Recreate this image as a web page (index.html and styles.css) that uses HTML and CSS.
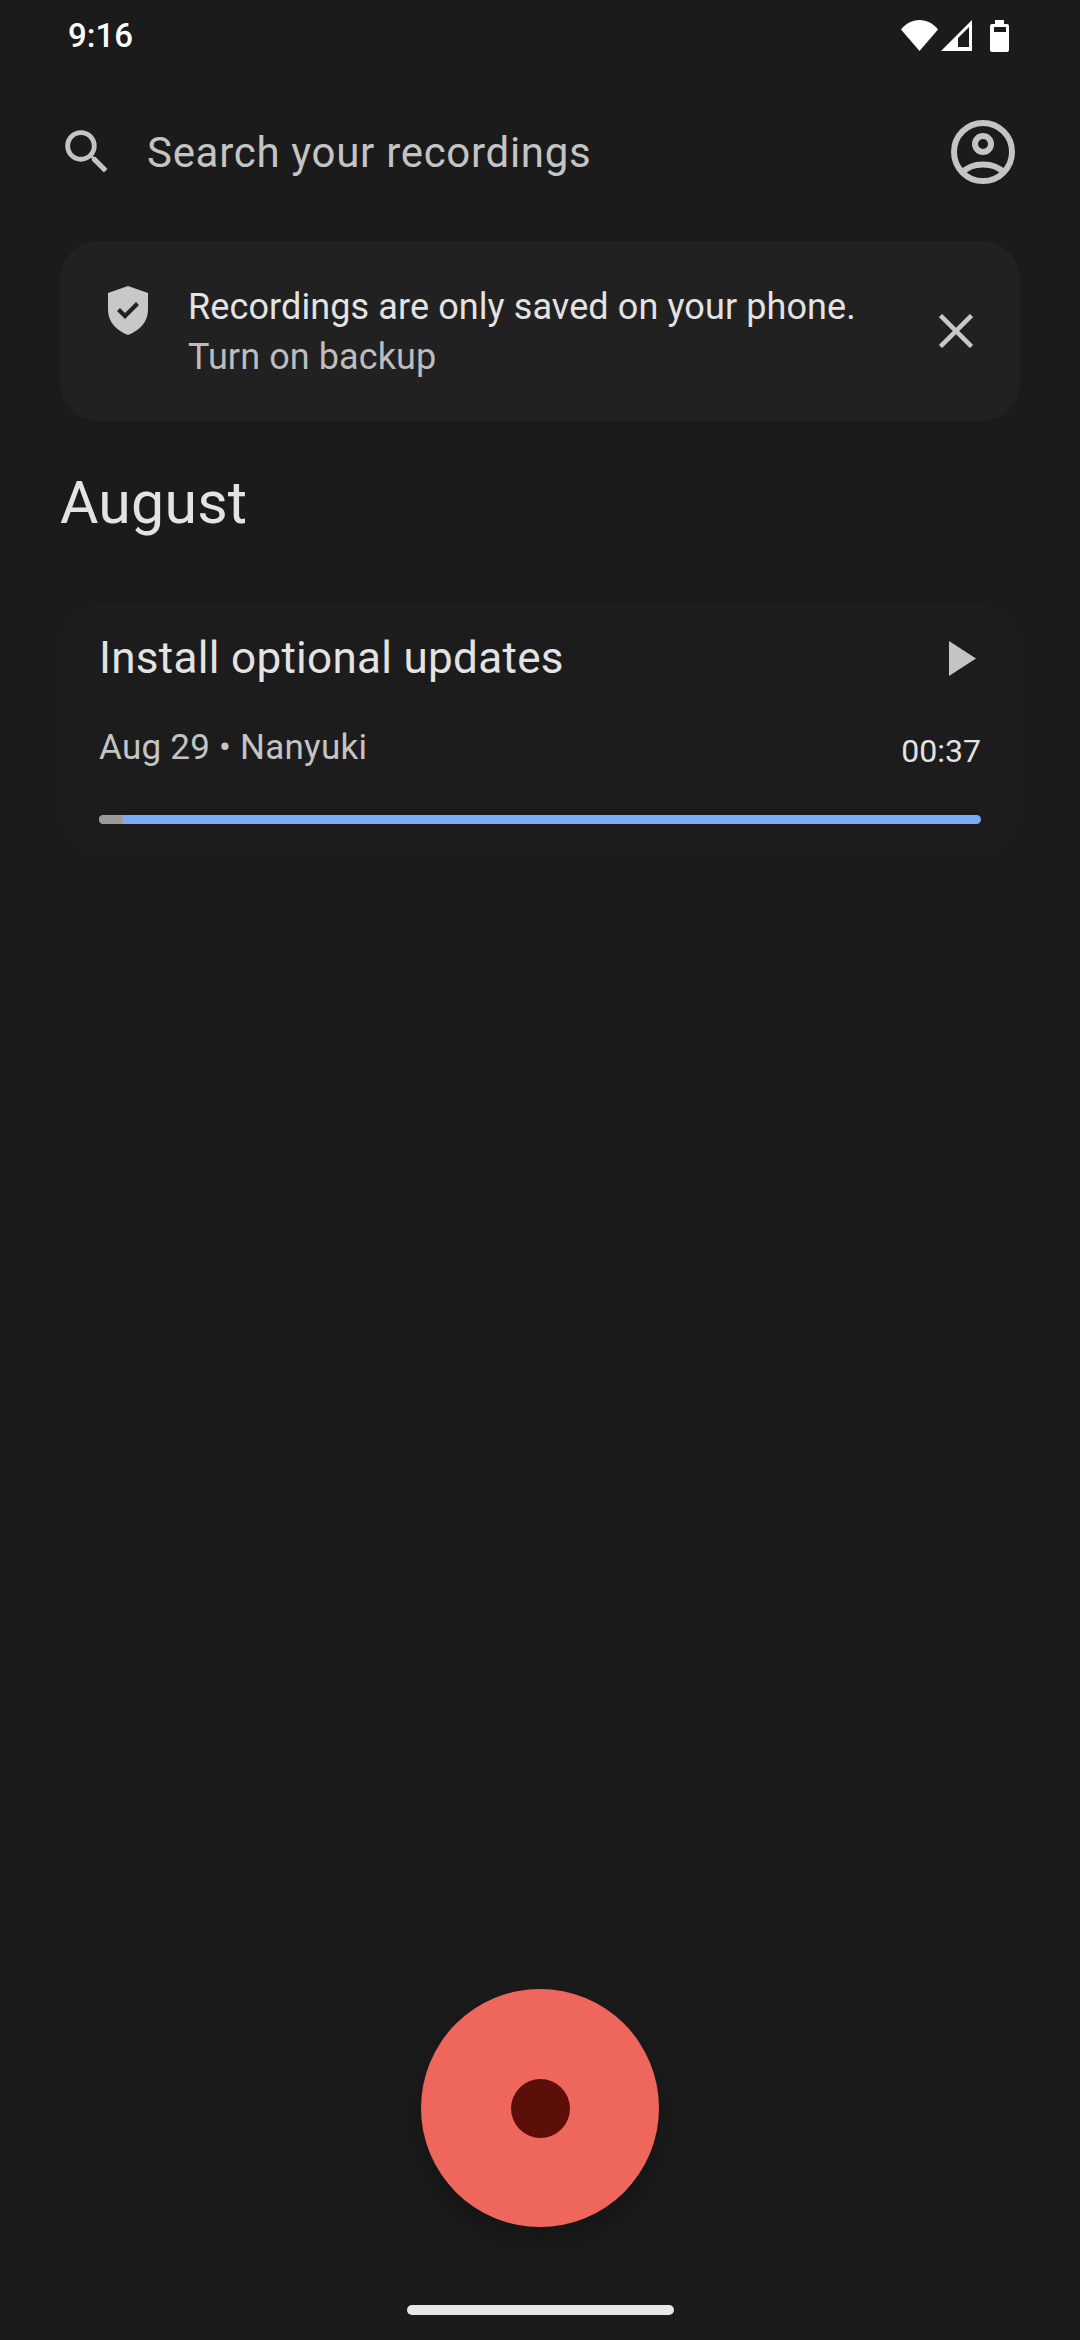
FILE: index.html
```html
<!DOCTYPE html>
<html lang="en">
<head>
    <meta charset="UTF-8">
    <meta name="viewport" content="width=device-width, initial-scale=1.0">
    <title>Recorder</title>
    <link rel="stylesheet" href="styles.css">
</head>
<body>
    <div id="screen">
        <div id="status-bar">
            <span class="time">9:16</span>
            <div class="status-icons">
                <svg class="wifi" width="37" height="31" viewBox="0 0 37 31"><path d="M0 9.500C5 3.500 11 0 18.500 0S32 3.500 37 9.500L18.500 31Z"/></svg>
                <svg class="signal" width="31" height="31" viewBox="0 0 31 31"><path fill-rule="evenodd" d="M0 31L31 0V31ZM17 27H28V7L17 18Z"/></svg>
                <svg class="battery" width="19" height="32" viewBox="0 0 19 32"><path fill-rule="evenodd" d="M5 0H14V4H17Q19 4 19 6V30Q19 32 17 32H2Q0 32 0 30V6Q0 4 2 4H5ZM4 7V12H16V7Z"/></svg>
            </div>
        </div>

        <div id="search">
            <svg class="search-icon" width="58" height="58" viewBox="0 0 24 24"><path d="M15.500 14h-.79l-.28-.27A6.470 6.470 0 0 0 16 9.500 6.500 6.500 0 1 0 9.500 16c1.610 0 3.090-.59 4.230-1.570l.27.28v.79l5 4.990L20.490 19l-4.990-5zm-6 0C7.010 14 5 11.990 5 9.500S7.010 5 9.500 5 14 7.010 14 9.500 11.990 14 9.500 14z"/></svg>
            <span class="search-text">Search your recordings</span>
            <svg class="avatar" width="64" height="64" viewBox="0 0 64 64">
                <circle cx="32" cy="32" r="29"/>
                <circle cx="32" cy="24" r="8"/>
                <path d="M11 53C17 46 24 44.500 32 44.500S47 46 53 53"/>
            </svg>
        </div>

        <div id="backup-card">
            <svg class="shield" width="40" height="49" viewBox="0 0 40 49"><path fill-rule="evenodd" d="M20 0L40 7V24C40 36 31 45 20 49C9 45 0 36 0 24V7ZM9 25L12 22L17 27L28 16L31 19L17 33Z"/></svg>
            <div class="backup-text">
                <p class="backup-main">Recordings are only saved on your phone.</p>
                <p class="backup-link">Turn on backup</p>
            </div>
            <svg class="close" width="34" height="34" viewBox="0 0 34 34"><path d="M1.500 1.500L32.500 32.500M32.500 1.500L1.500 32.500"/></svg>
        </div>

        <h2 class="month">August</h2>

        <div id="recording">
            <div class="rec-top">
                <span class="rec-title">Install optional updates</span>
                <svg class="play" width="27" height="35" viewBox="0 0 27 35"><path d="M0 0L27 17.500L0 35Z"/></svg>
            </div>
            <div class="rec-meta">
                <span class="rec-info">Aug 29 • Nanyuki</span>
                <span class="rec-length">00:37</span>
            </div>
            <div class="progress"><div class="progress-played"></div></div>
        </div>

        <div id="bottom">
            <div id="record-button"><div class="record-dot"></div></div>
            <div id="home-bar"></div>
        </div>
    </div>
</body>
</html>
```

FILE: styles.css
```css
* {
    box-sizing: border-box;
}
body {
    margin: 0;
    background-color: #1b1b1b;
    font-family: 'Roboto', 'Liberation Sans', sans-serif;
}
p, h2 {
    margin: 0;
    font-weight: 400;
}
#screen {
    width: 1080px;
    height: 2340px;
    display: flex;
    flex-direction: column;
}
#status-bar {
    height: 72px;
    padding: 16px 71px 0 68px;
    display: flex;
    justify-content: space-between;
    align-items: flex-start;
}
.time {
    color: #ffffff;
    font-size: 33px;
    line-height: 39px;
    font-weight: 500;
}
.status-icons {
    padding-top: 4px;
    display: flex;
    align-items: flex-start;
    fill: #ffffff;
}
.signal {
    margin-left: 3px;
}
.battery {
    margin-left: 18px;
}
#search {
    height: 160px;
    padding: 0 65px 0 58px;
    display: flex;
    align-items: center;
}
.search-icon {
    fill: #c4c4c4;
}
.search-text {
    flex: 1;
    margin-left: 31px;
    color: #c4c4c4;
    font-size: 42px;
    letter-spacing: 0.7px;
}
.avatar {
    fill: none;
    stroke: #c4c4c4;
    stroke-width: 6;
}
#backup-card {
    margin: 9px 60px 0;
    height: 180px;
    padding: 45px 47px 0 48px;
    display: flex;
    align-items: flex-start;
    background-color: #212121;
    border-radius: 38px;
}
.shield {
    fill: #c8c8c8;
}
.backup-text {
    flex: 1;
    margin-left: 40px;
    margin-top: -4px;
    font-size: 36px;
    line-height: 50px;
    letter-spacing: 0.1px;
}
.backup-main {
    color: #e3e3e3;
}
.backup-link {
    color: #bdbdbd;
}
.close {
    margin-top: 28px;
    fill: none;
    stroke: #c8c8c8;
    stroke-width: 4.500;
}
.month {
    margin: 48px 60px 0;
    color: #e3e3e3;
    font-size: 59px;
    line-height: 68px;
    letter-spacing: 0.2px;
}
#recording {
    margin: 66px 60px 0;
    height: 252px;
    padding: 27px 39px 0;
    border-radius: 38px;
    background-color: #1c1c1c;
}
.rec-top {
    display: flex;
    justify-content: space-between;
    align-items: center;
    padding-right: 5px;
}
.rec-title {
    color: #e3e3e3;
    font-size: 44px;
    line-height: 56px;
    letter-spacing: 0.3px;
}
.play {
    fill: #c4c4c4;
}
.rec-meta {
    margin-top: 40px;
    display: flex;
    justify-content: space-between;
    align-items: flex-start;
}
.rec-info {
    color: #c4c4c4;
    font-size: 35px;
    line-height: 44px;
    letter-spacing: 0.25px;
}
.rec-length {
    margin-top: 5px;
    color: #e3e3e3;
    font-size: 32px;
    line-height: 40px;
}
.progress {
    margin-top: 44px;
    height: 9px;
    background-color: #7baaf7;
    border-radius: 5px;
    overflow: hidden;
}
.progress-played {
    width: 24px;
    height: 100%;
    background-color: #9a9a9a;
}
#bottom {
    margin-top: auto;
    display: flex;
    flex-direction: column;
    align-items: center;
    padding-bottom: 25px;
}
#record-button {
    width: 238px;
    height: 238px;
    display: flex;
    align-items: center;
    justify-content: center;
    background-color: #ef675c;
    border-radius: 50%;
    box-shadow: 0 12px 30px rgba(0, 0, 0, 0.25);
}
.record-dot {
    width: 59px;
    height: 59px;
    background-color: #5c0e08;
    border-radius: 50%;
}
#home-bar {
    margin-top: 78px;
    width: 267px;
    height: 10px;
    background-color: #e8e8e8;
    border-radius: 5px;
}
```
